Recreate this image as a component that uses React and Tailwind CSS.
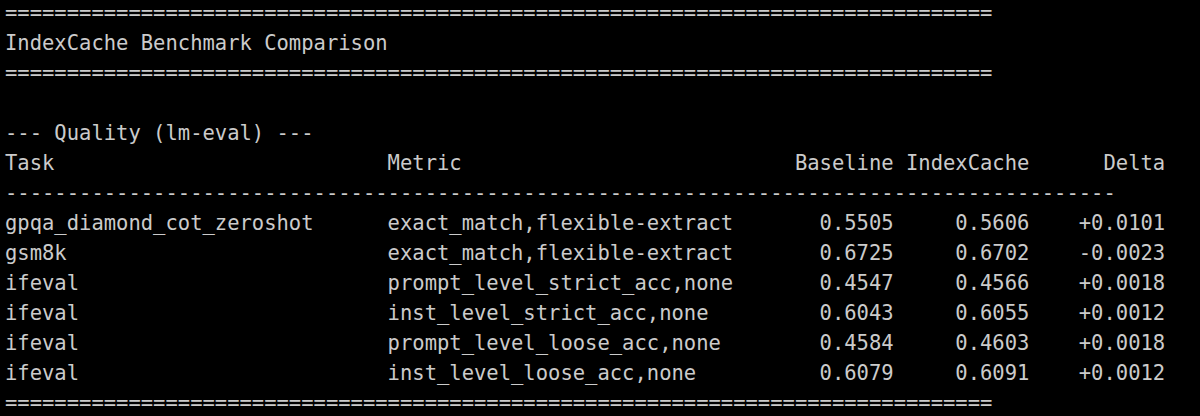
import React from "react";

const rows = [
  ["gpqa_diamond_cot_zeroshot", "exact_match,flexible-extract", "0.5505", "0.5606", "+0.0101"],
  ["gsm8k", "exact_match,flexible-extract", "0.6725", "0.6702", "-0.0023"],
  ["ifeval", "prompt_level_strict_acc,none", "0.4547", "0.4566", "+0.0018"],
  ["ifeval", "inst_level_strict_acc,none", "0.6043", "0.6055", "+0.0012"],
  ["ifeval", "prompt_level_loose_acc,none", "0.4584", "0.4603", "+0.0018"],
  ["ifeval", "inst_level_loose_acc,none", "0.6079", "0.6091", "+0.0012"],
];

const fmt = ([task, metric, base, ic, delta]) =>
  task.padEnd(31) + metric.padEnd(31) + base.padStart(10) + ic.padStart(11) + delta.padStart(11);

const App = () => {
  const lines = [
    "=".repeat(80),
    "IndexCache Benchmark Comparison",
    "=".repeat(80),
    "",
    "--- Quality (lm-eval) ---",
    fmt(["Task", "Metric", "Baseline", "IndexCache", "Delta"]),
    "-".repeat(90),
    ...rows.map(fmt),
    "=".repeat(80),
  ];

  return (
    <div className="w-full h-screen bg-black overflow-hidden">
      <pre className="-mt-[2px] pl-[5px] text-[20.5px] leading-[30px] text-[#cbcbcb] font-['DejaVu_Sans_Mono',monospace] whitespace-pre">
        {lines.map((line, i) => (
          <div key={i} className="h-[30px]">
            {line}
          </div>
        ))}
      </pre>
    </div>
  );
};

export default App;
